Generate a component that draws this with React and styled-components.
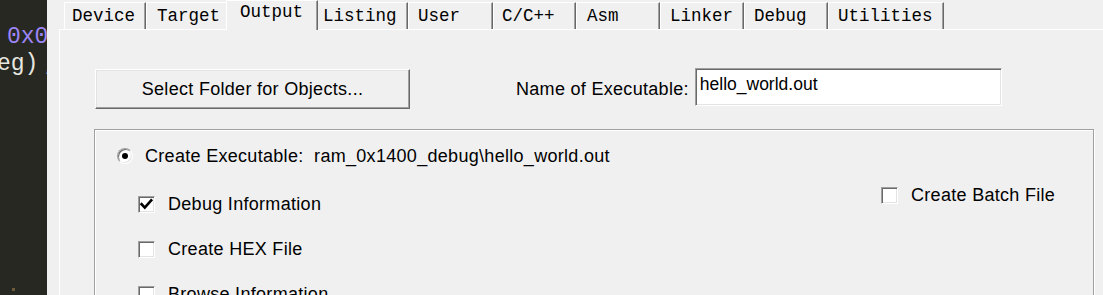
import React from 'react';
import styled, { createGlobalStyle } from 'styled-components';

const Global = createGlobalStyle`
  html, body { margin: 0; padding: 0; background: #f0f0f0; }
  body { width: 1103px; height: 295px; overflow: hidden; }
`;

const Screen = styled.div`
  display: flex;
  width: 1103px;
  height: 295px;
  overflow: hidden;
  font-family: "Liberation Sans", Arial, sans-serif;
  letter-spacing: 0.3px;
`;

const CodeStrip = styled.div`
  width: 47px;
  flex: none;
  box-sizing: border-box;
  background: #272822;
  overflow: hidden;
  display: flex;
  flex-direction: column;
  padding-top: 24px;
  font-family: "Liberation Mono", monospace;
  font-size: 23px;
  line-height: 27px;
  letter-spacing: 0;
  white-space: pre;
`;

const CodeLine = styled.div`
  color: ${(p) => p.$color};
  margin-left: ${(p) => p.$indent}px;
`;

const Punct = styled.span`
  color: #8fb8d8;
  margin-left: 4px;
`;

const CodeDot = styled.span`
  width: 3px;
  height: 3px;
  background: #6a5a3a;
  margin: auto 0 4px 12px;
`;

const Dialog = styled.div`
  flex: 1;
  display: flex;
  flex-direction: column;
  background: #f0f0f0;
  padding-left: 12px;
  min-width: 0;
`;

const TabRow = styled.div`
  display: flex;
  align-items: flex-end;
  height: 29px;
  padding-left: 5px;
  position: relative;
  z-index: 1;
`;

const Tab = styled.div`
  box-sizing: border-box;
  flex: none;
  width: ${(p) => p.$w}px;
  height: ${(p) => (p.$active ? 30 : 27)}px;
  margin: 0 ${(p) => (p.$active ? -2 : 0)}px ${(p) => (p.$active ? -1 : 0)}px;
  padding-left: ${(p) => p.$pl}px;
  padding-top: ${(p) => (p.$active ? 0 : 2)}px;
  border-top: 1px solid #fff;
  border-left: 1px solid #fff;
  border-right: 1px solid #696969;
  box-shadow: inset -1px 0 0 #a0a0a0;
  background: #f0f0f0;
  font-family: "Liberation Mono", monospace;
  font-size: 17.5px;
  line-height: 22px;
  letter-spacing: 0;
  color: #000;
  white-space: pre;
  position: relative;
  z-index: ${(p) => (p.$active ? 2 : 1)};
`;

const Panel = styled.div`
  flex: 1;
  border-top: 1px solid #fff;
  border-left: 1px solid #fff;
  display: flex;
  flex-direction: column;
  min-width: 0;
`;

const TopRow = styled.div`
  display: flex;
  align-items: flex-start;
  padding: 38px 0 0 35px;
`;

const Button = styled.div`
  box-sizing: border-box;
  width: 315px;
  height: 40px;
  margin-top: 1px;
  display: flex;
  align-items: center;
  justify-content: center;
  background: #f0f0f0;
  border-top: 1px solid #fff;
  border-left: 1px solid #fff;
  border-right: 1px solid #696969;
  border-bottom: 1px solid #696969;
  box-shadow: inset -1px -1px 0 #a0a0a0, inset 1px 1px 0 #e3e3e3;
  font-size: 18px;
  color: #000;
`;

const Label = styled.div`
  margin: 1px 0 0 106px;
  height: 40px;
  line-height: 40px;
  font-size: 18px;
  color: #000;
  white-space: nowrap;
`;

const TextInput = styled.div`
  box-sizing: border-box;
  width: 307px;
  height: 38px;
  margin-left: 6px;
  background: #fff;
  border-top: 1px solid #a0a0a0;
  border-left: 1px solid #a0a0a0;
  border-right: 1px solid #fff;
  border-bottom: 1px solid #fff;
  box-shadow: inset 1px 1px 0 #696969, inset -1px -1px 0 #e3e3e3;
  padding: 5px 0 0 4px;
  font-size: 17.5px;
  line-height: 20px;
  letter-spacing: 0;
  color: #000;
`;

const GroupBox = styled.div`
  box-sizing: border-box;
  width: 1000px;
  height: 300px;
  margin: 20px 0 0 34px;
  border: 1px solid #a0a0a0;
  box-shadow: inset 1px 1px 0 #fff, 1px 1px 0 #fff;
  display: grid;
  grid-template-columns: 786px auto;
  align-items: start;
  padding-top: 15px;
`;

const LeftCol = styled.div`
  display: flex;
  flex-direction: column;
  padding-left: 22px;
`;

const RightCol = styled.div`
  padding-top: 39px;
`;

const OptionRow = styled.div`
  display: flex;
  align-items: center;
  height: 22px;
  gap: ${(p) => p.$gap}px;
  font-size: 18px;
  color: #000;
  white-space: nowrap;
`;

const CheckList = styled.div`
  display: flex;
  flex-direction: column;
  gap: 23px;
  margin: 26px 0 0 21px;
`;

const Radio = styled.span`
  flex: none;
  width: 14px;
  height: 14px;
  border-radius: 50%;
  background: #fff;
  border: 1px solid;
  border-color: #a0a0a0 #fff #fff #a0a0a0;
  box-shadow: inset 1px 1px 0 #696969, inset -1px -1px 0 #e3e3e3;
  display: flex;
  align-items: center;
  justify-content: center;
  &::after {
    content: '';
    width: 6px;
    height: 6px;
    border-radius: 50%;
    background: #000;
  }
`;

const Box = styled.span`
  flex: none;
  width: 15px;
  height: 15px;
  background: #fff;
  border: 1px solid;
  border-color: #a0a0a0 #fff #fff #a0a0a0;
  box-shadow: inset 1px 1px 0 #696969, inset -1px -1px 0 #e3e3e3;
  display: flex;
  align-items: center;
  justify-content: center;
`;

const Checkbox = ({ checked, label }) => (
  <OptionRow $gap={13}>
    <Box>
      {checked && (
        <svg width="15" height="15" viewBox="0 0 15 15">
          <path d="M2.6 7.2 L5.8 10.6 L12.2 3.4" fill="none" stroke="#000" strokeWidth="2.6" strokeLinecap="square" />
        </svg>
      )}
    </Box>
    <span>{label}</span>
  </OptionRow>
);

const tabs = [
  { label: 'Device', w: 82, pl: 7 },
  { label: 'Target', w: 82, pl: 10 },
  { label: 'Output', w: 92, pl: 13, active: true },
  { label: 'Listing', w: 92, pl: 6 },
  { label: 'User', w: 85, pl: 9 },
  { label: 'C/C++', w: 83, pl: 8 },
  { label: 'Asm', w: 84, pl: 10 },
  { label: 'Linker', w: 84, pl: 9 },
  { label: 'Debug', w: 84, pl: 9 },
  { label: 'Utilities', w: 116, pl: 9 },
];

export default function App() {
  return (
    <>
      <Global />
      <Screen>
        <CodeStrip>
          <CodeLine $color="#9d85f5" $indent={7}>0x0</CodeLine>
          <CodeLine $color="#e8e8e0" $indent={-3}>
            eg)<Punct>;</Punct>
          </CodeLine>
          <CodeDot />
        </CodeStrip>
        <Dialog>
          <TabRow>
            {tabs.map((t) => (
              <Tab key={t.label} $w={t.w} $pl={t.pl} $active={t.active}>
                {t.label}
              </Tab>
            ))}
          </TabRow>
          <Panel>
            <TopRow>
              <Button>Select Folder for Objects...</Button>
              <Label>Name of Executable:</Label>
              <TextInput>hello_world.out</TextInput>
            </TopRow>
            <GroupBox>
              <LeftCol>
                <OptionRow $gap={12}>
                  <Radio />
                  <span>Create Executable:&nbsp; ram_0x1400_debug\hello_world.out</span>
                </OptionRow>
                <CheckList>
                  <Checkbox checked label="Debug Information" />
                  <Checkbox label="Create HEX File" />
                  <Checkbox label="Browse Information" />
                </CheckList>
              </LeftCol>
              <RightCol>
                <Checkbox label="Create Batch File" />
              </RightCol>
            </GroupBox>
          </Panel>
        </Dialog>
      </Screen>
    </>
  );
}
